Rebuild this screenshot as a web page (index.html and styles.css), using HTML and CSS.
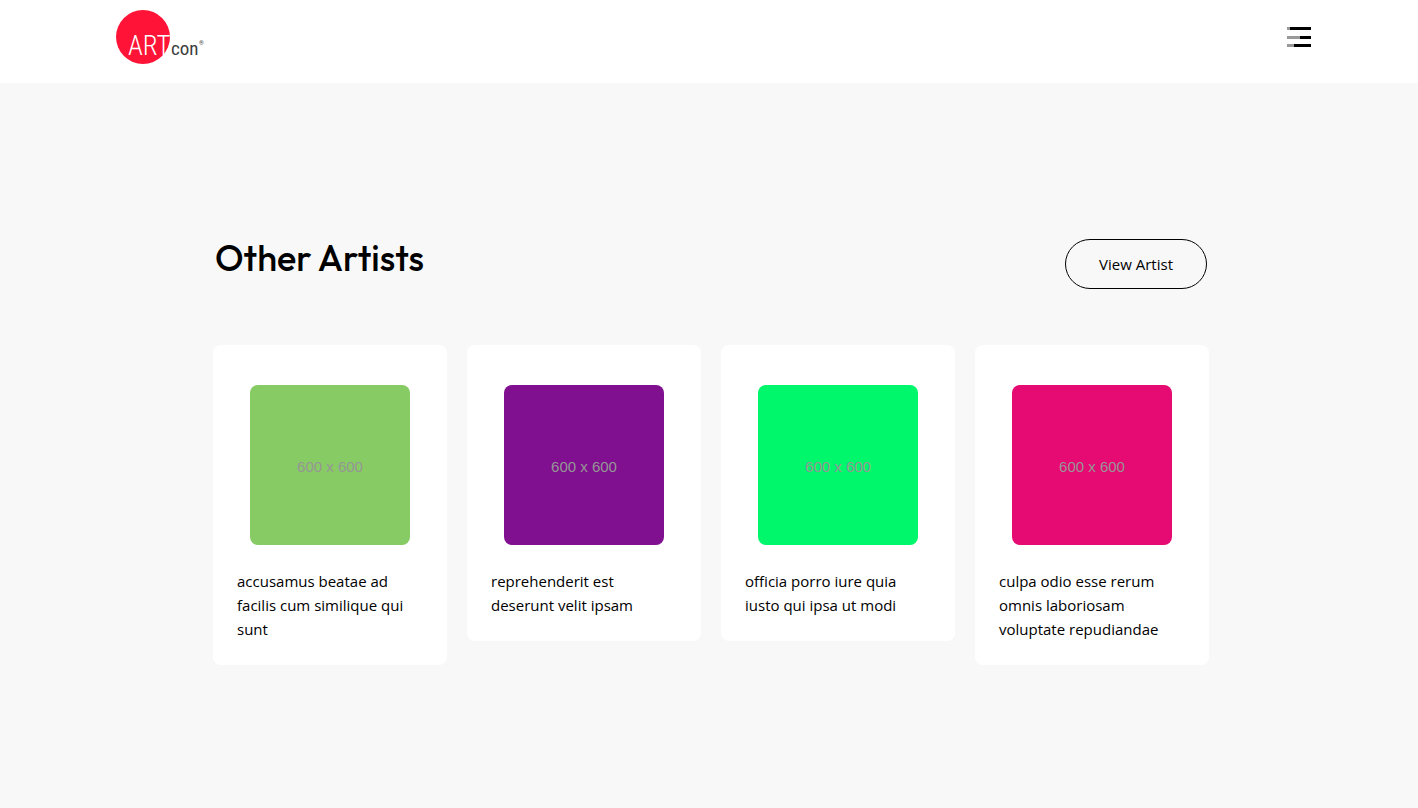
FILE: index.html
```html
<!DOCTYPE html>
<html lang="en">
<head>
<meta charset="utf-8">
<meta name="viewport" content="width=device-width, initial-scale=1">
<title>ARTcon</title>
<link rel="stylesheet" href="styles.css">
</head>
<body>
<header class="header">
  <div class="header-inner">
    <a class="logo" href="#" aria-label="ARTcon home">
      <svg class="logo-mark" width="90" height="56" viewBox="0 0 90 56">
        <circle cx="27" cy="28" r="27" fill="#ff1438"/>
        <text class="logo-art" x="12" y="46">ART</text>
        <text class="logo-con" x="55" y="46">con</text>
        <text class="logo-reg" x="83" y="36">®</text>
      </svg>
    </a>
    <button class="menu" type="button" aria-label="Open menu">
      <svg class="menu-icon" width="24" height="20" viewBox="0 0 24 20" shape-rendering="crispEdges">
        <path fill="#000" d="M3 0h21v3H3zM13 9h11v3H13zM7 17h17v3H7z"/>
        <path fill="#999" d="M0 0h3v3H0zM0 9h13v3H0zM0 17h7v3H0z"/>
      </svg>
    </button>
  </div>
</header>
<main class="artists">
  <div class="artists-head">
    <h1 class="title">Other Artists</h1>
    <button class="view" type="button">View Artist</button>
  </div>
  <div class="cards">
    <article class="card">
      <div class="thumb thumb-lime">600 x 600</div>
      <p class="card-text">accusamus beatae ad facilis cum similique qui sunt</p>
    </article>
    <article class="card">
      <div class="thumb thumb-purple">600 x 600</div>
      <p class="card-text">reprehenderit est deserunt velit ipsam</p>
    </article>
    <article class="card">
      <div class="thumb thumb-green">600 x 600</div>
      <p class="card-text">officia porro iure quia iusto qui ipsa ut modi</p>
    </article>
    <article class="card">
      <div class="thumb thumb-pink">600 x 600</div>
      <p class="card-text">culpa odio esse rerum omnis laboriosam voluptate repudiandae</p>
    </article>
  </div>
</main>
</body>
</html>
```
FILE: styles.css
```css
* {
  box-sizing: border-box;
}

body {
  margin: 0;
  background: #f8f8f8;
  color: #000;
  font-family: "Segoe UI", "Open Sans", "Noto Sans", sans-serif;
  font-size: 15px;
  line-height: 24px;
}

.header {
  background: #fff;
}

.header-inner {
  display: flex;
  justify-content: space-between;
  align-items: center;
  max-width: 1204px;
  margin: 0 auto;
  padding: 9px 0 18px 9px;
}

.logo,
.logo-mark,
.menu-icon {
  display: block;
}

.logo-mark {
  overflow: visible;
}

.logo-art {
  fill: #fff;
  font: 300 27px "Liberation Sans Narrow", "Roboto Condensed", Roboto, sans-serif;
}

.logo-con {
  fill: #3c3c3c;
  font: 400 19px "Liberation Sans Narrow", "Roboto Condensed", Roboto, sans-serif;
}

.logo-reg {
  fill: #3c3c3c;
  font: 400 6px Roboto, sans-serif;
}

.menu {
  padding: 0;
  border: 0;
  background: none;
  cursor: pointer;
}

.artists {
  max-width: 1000px;
  margin: 0 auto;
  padding: 156px 0 143px 4px;
}

.artists-head {
  display: flex;
  justify-content: space-between;
  align-items: flex-start;
  margin-bottom: 56px;
  padding: 0 2px;
}

.title {
  margin: 0;
  font: 500 36px/38px Outfit, Lato, sans-serif;
}

.view {
  padding: 12px 33px;
  border: 1px solid #000;
  border-radius: 25px;
  background: transparent;
  color: #000;
  font: inherit;
  cursor: pointer;
}

.cards {
  display: grid;
  grid-template-columns: repeat(auto-fit, minmax(220px, 1fr));
  align-items: start;
  gap: 20px;
}

.card {
  padding: 40px 24px 24px;
  border-radius: 8px;
  background: #fff;
}

.thumb {
  display: flex;
  justify-content: center;
  align-items: center;
  width: 160px;
  height: 160px;
  margin: 0 auto 24px;
  padding-top: 4px;
  border-radius: 8px;
  color: #969696;
  font: 15px/16px "Liberation Sans", Arial, sans-serif;
}

.thumb-lime {
  background: #87cb64;
}

.thumb-purple {
  background: #80108f;
}

.thumb-green {
  background: #00f76c;
}

.thumb-pink {
  background: #e60a73;
}

.card-text {
  margin: 0;
}
```
